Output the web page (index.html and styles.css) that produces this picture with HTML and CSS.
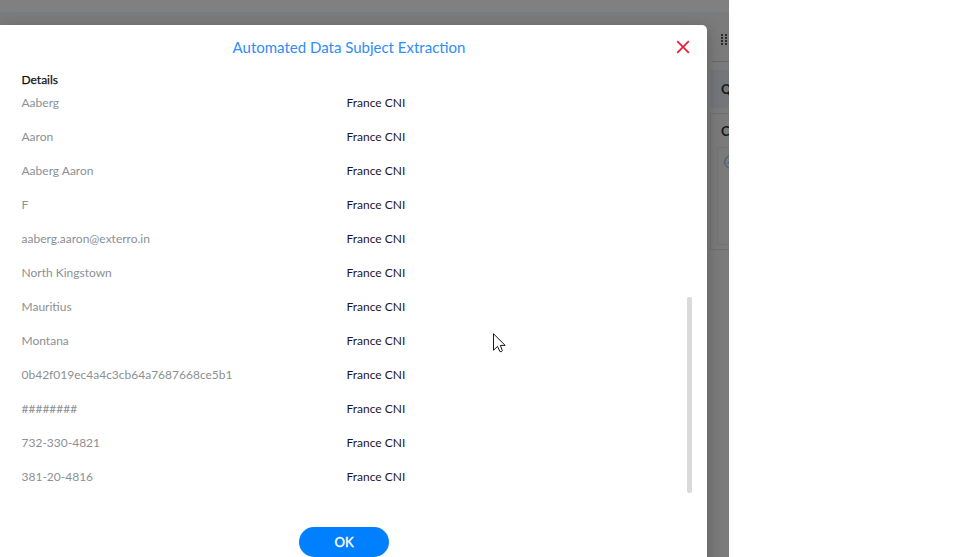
FILE: index.html
```
<!DOCTYPE html>
<html lang="en">
<head>
<meta charset="utf-8">
<title>Automated Data Subject Extraction</title>
<link rel="stylesheet" href="styles.css">
</head>
<body>
<div class="app">
  <div class="topbar"></div>
  <aside class="side">
    <div class="side-tools">
      <svg width="7" height="12" viewBox="0 0 7 12" fill="#2b2c30"><path d="M0 0h2v2H0zM4 0h2v2H4zM0 3h2v2H0zM4 3h2v2H4zM0 6h2v2H0zM4 6h2v2H4zM0 9h2v2H0zM4 9h2v2H4z"/></svg>
    </div>
    <div class="side-head">Q</div>
    <div class="side-card">
      <div class="side-title">C</div>
      <div class="side-box">
        <svg width="14" height="14" viewBox="0 0 14 14" fill="none" stroke="#2f5288"><circle cx="7" cy="7" r="6.3"/><path d="M3.5 8.5 7 5l3.5 3.5"/></svg>
      </div>
    </div>
  </aside>
  <section class="modal" role="dialog">
    <header class="modal-head">
      <h1>Automated Data Subject Extraction</h1>
      <svg class="close" width="14" height="14" viewBox="0 0 14 14" stroke="#ed1c2e" stroke-width="1.7"><path d="M1.2 1.2 12.8 12.8M12.8 1.2 1.2 12.8"/></svg>
    </header>
    <h2>Details</h2>
    <div class="scroll">
      <div class="rows">
        <div class="row"><span>Aaberg</span><b>France CNI</b></div>
        <div class="row"><span>Aaron</span><b>France CNI</b></div>
        <div class="row"><span>Aaberg Aaron</span><b>France CNI</b></div>
        <div class="row"><span>F</span><b>France CNI</b></div>
        <div class="row"><span>aaberg.aaron@exterro.in</span><b>France CNI</b></div>
        <div class="row"><span>North Kingstown</span><b>France CNI</b></div>
        <div class="row"><span>Mauritius</span><b>France CNI</b></div>
        <div class="row"><span>Montana</span><b>France CNI</b></div>
        <div class="row"><span>0b42f019ec4a4c3cb64a7687668ce5b1</span><b>France CNI</b></div>
        <div class="row"><span>########</span><b>France CNI</b></div>
        <div class="row"><span>732-330-4821</span><b>France CNI</b></div>
        <div class="row"><span>381-20-4816</span><b>France CNI</b></div>
      </div>
      <div class="thumb"></div>
    </div>
    <button class="ok">OK</button>
  </section>
  <svg class="cursor" width="13" height="20" viewBox="0 0 13 20" fill="#fff" stroke="#171722"><path d="M.5.8v16.4l4-3.8 2.4 5.1q1.3.9 2.5-.8L7.3 12.4h4.9z"/></svg>
</div>
</body>
</html>
```
FILE: styles.css
```
* { box-sizing: border-box; }
body { margin: 0; background: #fff; font-family: Lato, sans-serif; }
.app {
  position: relative;
  width: 729px;
  height: 557px;
  overflow: hidden;
  background: #7b7b7b;
}
.topbar {
  height: 17px;
  background: #808080;
  border-bottom: 5px solid #797b7e;
}
.side { width: 19px; margin-left: 710px; overflow: hidden; color: #15181e; font-size: 13px; font-weight: 700; }
.side-tools { height: 45px; margin-left: 2px; padding: 17px 0 0 9px; border-bottom: 1px solid #696969; }
.side-tools svg { display: block; }
.side-head { height: 38px; margin-top: 8px; padding-left: 11px; line-height: 38px; background: #73767a; }
.side-card { height: 137px; margin-top: 5px; border: 1px solid #707070; border-right: 0; }
.side-title { height: 33px; padding-left: 10px; line-height: 34px; }
.side-box { height: 98px; margin-left: 6px; padding: 7px 0 0 6px; border: 1px solid #747474; border-right: 0; }
.side-box svg { display: block; }
.modal {
  position: absolute;
  top: 25px;
  left: 0;
  width: 707px;
  height: 560px;
  padding-left: 21.5px;
  background: #fff;
  border-radius: 0 5px 0 0;
  box-shadow: 0 4px 16px rgba(0, 0, 0, .25);
}
.modal-head { display: flex; align-items: center; height: 45px; padding-right: 17px; }
h1 { flex: 1; margin: 0 0 0 -21.5px; padding-left: 22px; text-align: center; color: #2e8df7; font-size: 15px; font-weight: 400; line-height: 45px; }
.close { margin-bottom: 1px; }
h2 { margin: 0; height: 19px; color: #111; font-size: 12px; line-height: 19px; font-weight: 400; -webkit-text-stroke: .25px #111; }
.scroll { display: flex; justify-content: space-between; height: 404px; padding-right: 15px; }
.row { display: grid; grid-template-columns: 325px 200px; height: 34px; font-size: 12px; line-height: 28px; }
.row span { color: #8c9095; }
.row b { color: #1c1730; font-weight: 400; }
.thumb { width: 5px; height: 196px; margin-top: 208px; border-radius: 2px; background: #dadada; }
.ok {
  display: block;
  width: 90px;
  height: 30px;
  margin: 34px 0 0 277.5px;
  padding: 0;
  border: 0;
  border-radius: 15px;
  background: #007fff;
  color: #fff;
  font: 400 13px/28px Lato, sans-serif;
  -webkit-text-stroke: .4px #fff;
}
.cursor { position: absolute; left: 493px; top: 333px; }
```
